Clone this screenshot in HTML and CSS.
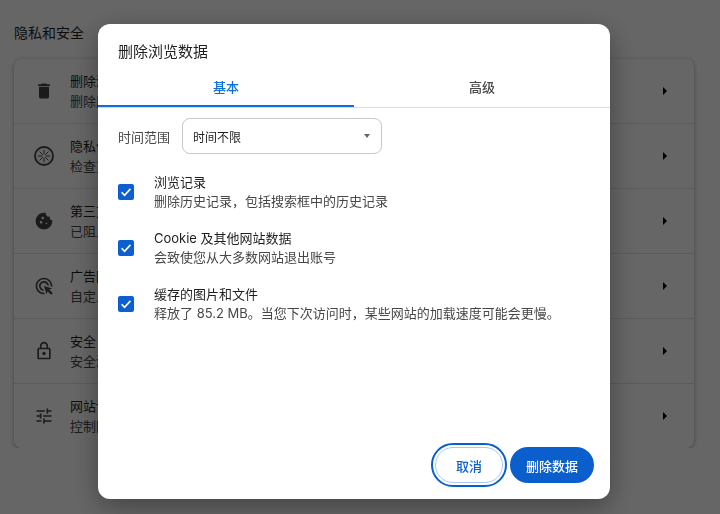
FILE: index.html
```html
<!DOCTYPE html>
<html lang="zh-CN">
<head>
  <meta charset="UTF-8">
  <meta name="viewport" content="width=device-width, initial-scale=1.0">
  <title>隐私和安全</title>
  <link rel="stylesheet" href="styles.css">
</head>
<body>

  <div class="page">
    <h2 class="page-title">隐私和安全</h2>

    <!-- Settings list behind the dialog -->
    <div class="card">
      <div class="row">
        <svg class="row-icon" viewBox="0 0 24 24"><path d="M6 19c0 1.1.9 2 2 2h8c1.1 0 2-.9 2-2V7H6v12zM19 4h-3.5l-1-1h-5l-1 1H5v2h14V4z"/></svg>
        <div class="row-text">
          <div class="row-title">删除浏览数据</div>
          <div class="row-sub">删除历史记录、Cookie、缓存及其他数据</div>
        </div>
        <span class="row-arrow"></span>
      </div>
      <div class="row">
        <svg class="row-icon" viewBox="0 0 24 24"><circle class="ring" cx="12" cy="12" r="10.8"/><path class="spokes" d="M12 4.5v5.5M12 14v5.5M4.5 12H10M14 12h5.5M6.7 6.7l3.9 3.9M13.4 13.4l3.9 3.9M17.3 6.7l-3.9 3.9M10.6 13.4l-3.9 3.9"/></svg>
        <div class="row-text">
          <div class="row-title">隐私保护指南</div>
          <div class="row-sub">检查重要的隐私和安全控制设置</div>
        </div>
        <span class="row-arrow"></span>
      </div>
      <div class="row">
        <svg class="row-icon" viewBox="0 0 24 24"><path d="M21.95 10.99c-1.79-.03-3.7-1.95-2.68-4.22-2.98 1-5.77-1.59-5.19-4.56C6.95.71 2 6.58 2 12c0 5.52 4.48 10 10 10 5.89 0 10.54-5.08 9.95-11.01zM8.5 15c-.83 0-1.5-.67-1.5-1.5S7.67 12 8.5 12s1.5.67 1.5 1.5S9.33 15 8.5 15zm2-5C9.67 10 9 9.33 9 8.5S9.67 7 10.5 7s1.5.67 1.5 1.5-.67 1.5-1.5 1.5zm4.5 6c-.55 0-1-.45-1-1s.45-1 1-1 1 .45 1 1-.45 1-1 1z"/></svg>
        <div class="row-text">
          <div class="row-title">第三方 Cookie</div>
          <div class="row-sub">已阻止无痕模式下的第三方 Cookie</div>
        </div>
        <span class="row-arrow"></span>
      </div>
      <div class="row">
        <svg class="row-icon" viewBox="0 0 24 24"><path d="M11.71 17.99A5.993 5.993 0 0 1 6 12c0-3.31 2.69-6 6-6 3.22 0 5.84 2.53 5.99 5.71l-2.1-.63A3.999 3.999 0 0 0 12 8c-2.21 0-4 1.79-4 4 0 1.89 1.31 3.47 3.08 3.89l.63 2.1zM22 12c0 .3-.01.6-.04.9l-1.97-.59c.01-.1.01-.21.01-.31 0-4.42-3.58-8-8-8s-8 3.58-8 8 3.58 8 8 8c.1 0 .21 0 .31-.01l.59 1.97c-.3.03-.6.04-.9.04-5.52 0-10-4.48-10-10S6.48 2 12 2s10 4.48 10 10zm-3.77 4.26L22 15l-10-3 3 10 1.26-3.77 4.27 4.27 1.98-1.98-4.28-4.26z"/></svg>
        <div class="row-text">
          <div class="row-title">广告隐私设置</div>
          <div class="row-sub">自定义网站用来向您展示广告的信息</div>
        </div>
        <span class="row-arrow"></span>
      </div>
      <div class="row">
        <svg class="row-icon" viewBox="0 0 24 24"><path d="M18 8h-1V6c0-2.76-2.24-5-5-5S7 3.24 7 6v2H6c-1.1 0-2 .9-2 2v10c0 1.1.9 2 2 2h12c1.1 0 2-.9 2-2V10c0-1.1-.9-2-2-2zM9 6c0-1.66 1.34-3 3-3s3 1.34 3 3v2H9V6zm9 14H6V10h12v10zm-6-3c1.1 0 2-.9 2-2s-.9-2-2-2-2 .9-2 2 .9 2 2 2z"/></svg>
        <div class="row-text">
          <div class="row-title">安全</div>
          <div class="row-sub">安全浏览（危险网站防护功能）和其他安全设置</div>
        </div>
        <span class="row-arrow"></span>
      </div>
      <div class="row">
        <svg class="row-icon" viewBox="0 0 24 24"><path d="M3 17v2h6v-2H3zM3 5v2h10V5H3zm10 16v-2h8v-2h-8v-2h-2v6h2zM7 9v2H3v2h4v2h2V9H7zm14 4v-2H11v2h10zm-6-4h2V7h4V5h-4V3h-2v6z"/></svg>
        <div class="row-text">
          <div class="row-title">网站设置</div>
          <div class="row-sub">控制网站可以使用和显示什么信息（如位置信息、摄像头、弹出式窗口及其他）</div>
        </div>
        <span class="row-arrow"></span>
      </div>
    </div>
  </div>

  <!-- Dialog -->
  <div class="scrim">
    <div class="dialog">
      <h2 class="dialog-title">删除浏览数据</h2>

      <div class="tabs">
        <div class="tab active">基本</div>
        <div class="tab">高级</div>
      </div>

      <div class="dialog-body">
        <div class="range">
          <span class="range-label">时间范围</span>
          <div class="select">
            <span>时间不限</span>
            <span class="select-arrow"></span>
          </div>
        </div>

        <div class="check-item">
          <div class="checkbox"><svg viewBox="0 0 16 16"><path d="M3.6 8.3l3 3 5.8-6.4"/></svg></div>
          <div>
            <div class="check-title">浏览记录</div>
            <div class="check-sub">删除历史记录，包括搜索框中的历史记录</div>
          </div>
        </div>

        <div class="check-item">
          <div class="checkbox"><svg viewBox="0 0 16 16"><path d="M3.6 8.3l3 3 5.8-6.4"/></svg></div>
          <div>
            <div class="check-title">Cookie 及其他网站数据</div>
            <div class="check-sub">会致使您从大多数网站退出账号</div>
          </div>
        </div>

        <div class="check-item">
          <div class="checkbox"><svg viewBox="0 0 16 16"><path d="M3.6 8.3l3 3 5.8-6.4"/></svg></div>
          <div>
            <div class="check-title">缓存的图片和文件</div>
            <div class="check-sub">释放了 85.2 MB。当您下次访问时，某些网站的加载速度可能会更慢。</div>
          </div>
        </div>
      </div>

      <div class="btn-group">
        <button class="cancel-btn">取消</button>
        <button class="delete-btn">删除数据</button>
      </div>
    </div>
  </div>

</body>
</html>
```

FILE: styles.css
```css
body {
  font-family: Inter, "Noto Sans CJK SC", sans-serif;
  background-color: #fff;
  color: #1f1f1f;
  margin: 0;
  overflow: hidden;
}
.page {
  padding: 23px 26px 0 14px;
}
.page-title {
  font-size: 14px;
  font-weight: 400;
  line-height: 20px;
  margin: 0 0 16px;
}
.card {
  background: #fff;
  border-radius: 8px;
  box-shadow: 0 1px 4px rgba(0, 0, 0, 0.35);
}
.row {
  display: flex;
  align-items: center;
  height: 64px;
  padding: 0 26px 0 20px;
  border-top: 1px solid #e3e3e3;
}
.row:first-child {
  border-top: none;
}
.row-icon {
  width: 20px;
  height: 20px;
  flex: none;
  fill: #444;
  margin-right: 16px;
}
.ring {
  fill: none;
  stroke: #444;
  stroke-width: 2.2;
}
.spokes {
  fill: none;
  stroke: #444;
  stroke-width: 1.2;
}
.row-text {
  flex: 1;
  min-width: 0;
  font-size: 13px;
  line-height: 20px;
  white-space: nowrap;
  overflow: hidden;
}
.row-sub {
  color: #474747;
}
.row-arrow {
  flex: none;
  width: 0;
  height: 0;
  margin-right: 1px;
  border-left: 4px solid #000;
  border-top: 4px solid transparent;
  border-bottom: 4px solid transparent;
}
.scrim {
  position: fixed;
  top: 0;
  left: 0;
  right: 0;
  bottom: 0;
  background: rgba(0, 0, 0, 0.6);
  padding: 24px 0 0 98px;
}
.dialog {
  display: flex;
  flex-direction: column;
  width: 512px;
  height: 475px;
  background: #fff;
  border-radius: 12px;
  box-shadow: 0 8px 28px rgba(0, 0, 0, 0.35);
}
.dialog-title {
  font-size: 15px;
  font-weight: 400;
  line-height: 20px;
  margin: 0;
  padding: 18px 20px 0;
}
.tabs {
  display: flex;
  margin-top: 10px;
  border-bottom: 1px solid #dcdcdc;
}
.tab {
  flex: 1;
  height: 35px;
  padding-top: 5px;
  box-sizing: border-box;
  text-align: center;
  font-size: 13px;
  font-weight: 500;
  line-height: 20px;
  color: #474747;
}
.tab.active {
  color: #0b6fe0;
  border-bottom: 2px solid #0b6fe0;
}
.dialog-body {
  flex: 1;
  padding: 10px 20px 0;
}
.range {
  display: flex;
  align-items: center;
  gap: 12px;
  font-size: 13px;
  margin-bottom: 19px;
}
.range-label {
  color: #474747;
}
.select {
  display: flex;
  align-items: center;
  justify-content: space-between;
  width: 200px;
  height: 36px;
  box-sizing: border-box;
  padding: 0 11px 0 10px;
  border: 1px solid #c7c7c7;
  border-radius: 8px;
  font-size: 12px;
  color: #1f1f1f;
}
.select-arrow {
  width: 0;
  height: 0;
  border-top: 4px solid #666;
  border-left: 3.5px solid transparent;
  border-right: 3.5px solid transparent;
}
.check-item {
  display: flex;
  align-items: center;
  gap: 20px;
  height: 38px;
  margin-bottom: 18px;
  font-size: 13px;
  line-height: 19px;
}
.checkbox {
  width: 16px;
  height: 16px;
  flex: none;
  background: #0b5fd0;
  border-radius: 2px;
}
.checkbox svg {
  display: block;
  fill: none;
  stroke: #fff;
  stroke-width: 1.6;
}
.check-sub {
  color: #474747;
}
.btn-group {
  display: flex;
  justify-content: flex-end;
  gap: 7px;
  padding: 0 16px 16px;
}
button {
  height: 36px;
  border-radius: 18px;
  font-family: inherit;
  font-size: 13px;
  font-weight: 500;
  padding: 0;
}
.cancel-btn {
  width: 68px;
  background: #fff;
  color: #0b5fcc;
  border: 1px solid #a8c7fa;
  outline: 2px solid #0b5fcc;
  outline-offset: 2px;
}
.delete-btn {
  width: 84px;
  background: #0b5fcc;
  color: #fff;
  border: none;
}
```
